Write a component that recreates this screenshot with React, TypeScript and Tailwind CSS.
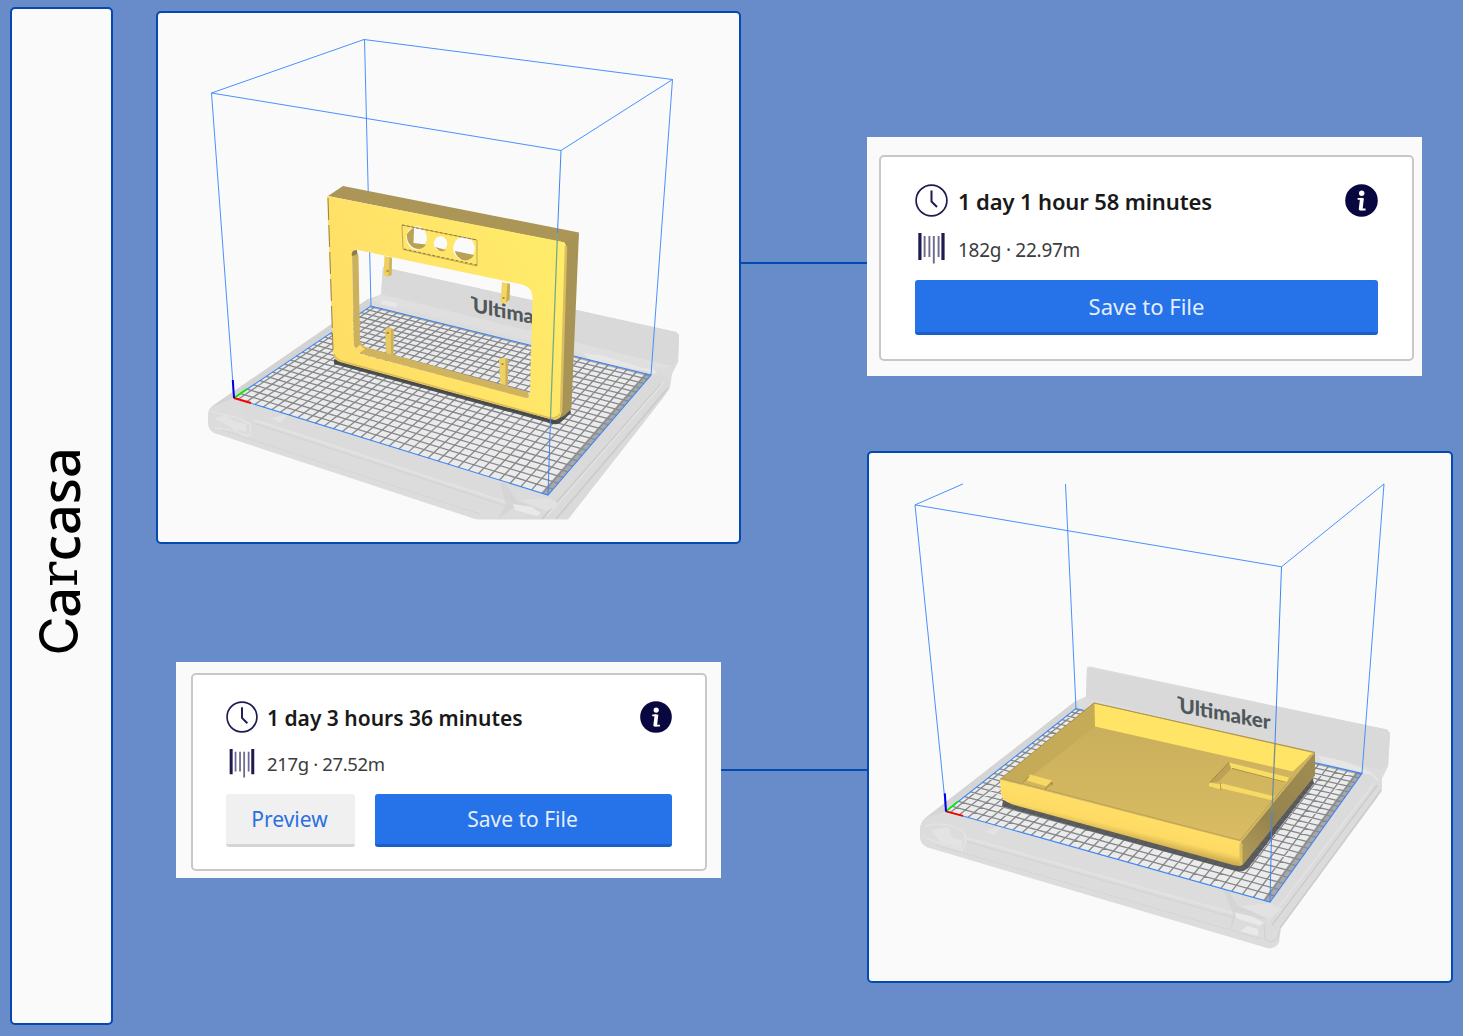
import React from "react";

type Pt = [number, number];

/** Maps the unit square onto a perspective quad: (0,0) (1,0) (1,1) (0,1). */
function project(q: [Pt, Pt, Pt, Pt]) {
  const [[x0, y0], [x1, y1], [x2, y2], [x3, y3]] = q;
  const dx1 = x1 - x2, dx2 = x3 - x2, dx3 = x0 - x1 + x2 - x3;
  const dy1 = y1 - y2, dy2 = y3 - y2, dy3 = y0 - y1 + y2 - y3;
  const den = dx1 * dy2 - dx2 * dy1;
  const g = (dx3 * dy2 - dx2 * dy3) / den;
  const h = (dx1 * dy3 - dx3 * dy1) / den;
  const a = x1 - x0 + g * x1, b = x3 - x0 + h * x3;
  const d = y1 - y0 + g * y1, e = y3 - y0 + h * y3;
  return (u: number, v: number): Pt => {
    const w = g * u + h * v + 1;
    return [(a * u + b * v + x0) / w, (d * u + e * v + y0) / w];
  };
}

const seg = (a: Pt, b: Pt) =>
  `M${a[0].toFixed(2)} ${a[1].toFixed(2)}L${b[0].toFixed(2)} ${b[1].toFixed(2)}`;

/** Build plate: 330 x 240 mm with a line every 10 mm, counted from the centre. */
function Plate({ left, front, right, back }: { left: Pt; front: Pt; right: Pt; back: Pt }) {
  const at = project([left, front, right, back]);
  let d = "";
  for (let x = 5; x < 330; x += 10) d += seg(at(x / 330, 0), at(x / 330, 1));
  for (let y = 10; y < 240; y += 10) d += seg(at(0, y / 240), at(1, y / 240));
  const outline = [left, front, right, back].map((p) => p.join(",")).join(" ");
  const strip = [at(0.981, 0), front, right, at(0.981, 1)].map((p) => p.join(",")).join(" ");
  const stripBack = [at(0, 0.985), at(1, 0.985), right, back].map((p) => p.join(",")).join(" ");
  return (
    <g>
      <polygon points={outline} fill="#ebebeb" />
      <path d={d} stroke="#85878a" strokeWidth="1.3" fill="none" />
      <polygon points={strip} fill="#8a8b8e" opacity="0.7" />
      <polygon points={stripBack} fill="#77797c" opacity="0.6" />
      <polygon points={outline} fill="none" stroke="#3d86f5" strokeWidth="1.1" />
    </g>
  );
}

function Axes({ x, y, up, gx, gy, rx, ry }: { x: number; y: number; up: number; gx: number; gy: number; rx: number; ry: number }) {
  return (
    <g fill="none">
      <path d={`M${x} ${y}L${x + gx} ${y + gy}`} stroke="#00f000" strokeWidth="1.8" />
      <path d={`M${x} ${y}L${x + rx} ${y + ry}`} stroke="#f80000" strokeWidth="1.9" />
      <path d={`M${x} ${y}L${x - 1.2} ${y - up}`} stroke="#0000e6" strokeWidth="2" />
    </g>
  );
}

function FrameScene() {
  return (
    <svg className="block h-full w-full" viewBox="158 13 581 529" preserveAspectRatio="none">
      <defs>
        <linearGradient id="faceA" x1="330" y1="360" x2="560" y2="240" gradientUnits="userSpaceOnUse">
          <stop offset="0" stopColor="#ffdd66" />
          <stop offset="1" stopColor="#ffec6a" />
        </linearGradient>
        <linearGradient id="sideA" x1="0" y1="240" x2="0" y2="415" gradientUnits="userSpaceOnUse">
          <stop offset="0" stopColor="#a89357" />
          <stop offset="1" stopColor="#a99458" />
        </linearGradient>
        <clipPath id="cutA"><rect x="158" y="13" width="582" height="506.5" /></clipPath>
      </defs>
      <g clipPath="url(#cutA)">
        <path d="M211 407L368 299L381 294.500L383 267L386 268L676 332L679 335L678 362L672 374L670 388L663 398L566 522H484L214 433Q208 430 208 423L208 416Q208 410 211 407Z" fill="#dcdcdc" />
        <path d="M383 267L676 332L679 335L678 362L671 366L381 296Z" fill="#d9d9d9" />
        <path d="M381 294L372 301L650 371L671 366Z" fill="#dfdfdf" />
        <path d="M383 300L398 303L396 308L380 304ZM583 353L604 356L640 367L655 370L660 378L646 371L590 361Z" fill="#e9e9e9" opacity="0.8" />
        <path d="M211 407L368 299L371 306L234 398Z" fill="#d3d3d3" />
        <path d="M651 375L660 372L670 380L664 396L568 519L522 519L548 495Z" fill="#dadada" />
        <path d="M661 384L542 519M668 388L556 519" stroke="#cbcbcb" strokeWidth="1.600" fill="none" />
        <path d="M664 382L547 516" stroke="#e4e4e4" strokeWidth="1.200" fill="none" />
        <path d="M234 398L548 495L522 510L250 424Z" fill="#dbdbdb" />
        <path d="M254 420L514 505" stroke="#e2e2e2" strokeWidth="2.500" fill="none" />
        <path d="M256 424L512 508" stroke="#d3d3d3" strokeWidth="1" fill="none" />
        <path d="M222 430L480 514" stroke="#cfcfcf" strokeWidth="0.900" strokeDasharray="2 1.500" fill="none" />
        <path d="M211 411Q226 416 236 417L250 424L251 434L246 436L234 430L214 428" stroke="#e5e5e5" strokeWidth="1.200" fill="none" />
        <path d="M214 418L226 415L233 421L246 424V432L232 428ZM272 418L290 413L280 423Z" fill="#e5e5e5" opacity="0.800" />
        <path d="M500 482L506 484L517 501L540 510L530 513L513 508L497 520L506 505Z" fill="#d0d0d0" opacity="0.600" />
        <path d="M513 504L532 507L541 513L537 516L515 510Z" fill="#e9e9e9" />
        <path d="M519 500L549 498L560 504L547 511Z" fill="#e1e1e1" />
      </g>
      <path d="M471 297L475.500 298.500" stroke="#50575a" strokeWidth="2" />
      <text transform="matrix(1 0.2 0 1 473 312)" fill="#50575a" fontFamily="Lato" fontWeight="900" fontSize="20" textLength="90" lengthAdjust="spacingAndGlyphs">Ultimaker</text>
      <Plate left={[234, 398]} front={[548, 495]} right={[651, 375]} back={[371, 306]} />
      <path d="M211.500 93L364 39.500L672.500 79.500L561 150.500ZM211.500 93L234 398M364.500 39.500L371 306M672.500 79.500L651 375" stroke="#3484ff" strokeWidth="0.900" fill="none" />
      <path d="M334 359L556 420L570 408L571 413L560 423Q555 426 546 422L334 364Z" fill="#3f4042" opacity="0.900" />
      <path d="M328 196L343 186L579 232.500L566 243Z" fill="#ab9658" />
      <path d="M565 242L579 232.500L571.500 407Q570 412 562 417L556 420Z" fill="url(#sideA)" />
      <path fillRule="evenodd" fill="url(#faceA)" d="M327 196L561 241.500Q566 242.500 566 246L561 414Q560 421 550 419L340 362Q334 360 333 352ZM352 253Q352 249 358 250L522 284.500Q532 287 532.500 297L530 393L528 398L364 355Q355 352 354 345ZM406.600 235.500A10 11.500 0 0 0 426.600 240.500A10 11.500 0 0 0 406.600 235.500ZM434 242A6.500 7 0 0 0 447 245A6.500 7 0 0 0 434 242ZM453.500 246A10.500 11.500 0 0 0 474.500 251A10.500 11.500 0 0 0 453.500 246Z" />
      <path d="M334 354Q335 359 341 361L550 418Q557 419 560 414" stroke="#dcbc5a" strokeWidth="1.600" fill="none" />
      <path d="M328 198L333 350" stroke="#96834f" strokeWidth="1" strokeDasharray="22 5" fill="none" />
      <path d="M566 246L561 413" stroke="#d9bd5f" strokeWidth="2.500" fill="none" />
      <path d="M352 253Q352 249 357 251L358.500 256L360 342L364 348L357 351L354 345Z" fill="#cbb05e" />
      <path d="M351.500 255Q352 250 357 250L357 254L353 256Z" fill="#8f7d49" />
      <path d="M360 342L365 347L528 392L529 396L526 398L365 355L357 351Q355 347 360 342Z" fill="#cfb35f" />
      <path d="M355 349L360 345L365 349L358 354Z" fill="#fddd67" />
      <path d="M402 225L477 240V266L403 249.500Z" fill="none" stroke="#c2a957" strokeWidth="1" />
      <path d="M402 225L477 240M404 249L477 265" stroke="#86763f" strokeWidth="0.900" strokeDasharray="3 1.800" fill="none" />
      <path d="M407 234Q412 227 414 228L413.500 243L426 244.500Q422 251 414 248Q406 243 407 234ZM435 247L446 250Q443 252 439 250.500ZM455 251L474 255Q470 262 462 260Q456 257 455 251Z" fill="#baa153" />
      <path d="M384.500 256L392 258L391.500 275L388 277L383.500 275Z" fill="#edcf62" />
      <path d="M389.500 257L392 258L391.500 275L388.500 276Z" fill="#cfb35d" />
      <path d="M502 282L510 284L509.500 300L505 304L500.500 302Z" fill="#f3d664" />
      <path d="M507.500 283L510 284L509.500 300L506 302Z" fill="#c8ad59" />
      <path d="M385 329L389 327L393.500 329V355L386 353Z" fill="#e8c962" />
      <path d="M391 329L393.500 329V355L391 354Z" fill="#cbaf5a" />
      <path d="M499 359L503 357.500L508 359V386L500.500 384Z" fill="#eed163" />
      <path d="M505.500 359L508 359V386L505.500 385Z" fill="#cbaf5a" />
      <path d="M386.500 332h2.500v2h-2.500zM386.500 270h2v2h-2zM502.500 297h2v2h-2zM501.500 363h2v2h-2z" fill="#b08d38" />
      <path d="M561 150.500L557.500 233M550.500 418L548 495" stroke="#3d86f5" strokeWidth="1" fill="none" />
      <path d="M557.500 233L550.500 418" stroke="#78a98f" strokeWidth="1.300" fill="none" />
      <Axes x={234} y={398} up={18} gx={13} gy={-9} rx={17} ry={5} />
    </svg>
  );
}

function TrayScene() {
  return (
    <svg className="block h-full w-full" viewBox="869 453 582 529" preserveAspectRatio="none">
      <defs>
        <linearGradient id="floorB" x1="1150" y1="710" x2="1150" y2="850" gradientUnits="userSpaceOnUse">
          <stop offset="0" stopColor="#c8ad5b" />
          <stop offset="1" stopColor="#dabd63" />
        </linearGradient>
        <linearGradient id="frontB" x1="1121" y1="811" x2="1115" y2="836" gradientUnits="userSpaceOnUse">
          <stop offset="0" stopColor="#ffde67" />
          <stop offset="0.650" stopColor="#fdda64" />
          <stop offset="1" stopColor="#d0af51" />
        </linearGradient>
        <linearGradient id="sideB" x1="1240" y1="850" x2="1315" y2="760" gradientUnits="userSpaceOnUse">
          <stop offset="0" stopColor="#ad9856" />
          <stop offset="0.350" stopColor="#96844f" />
          <stop offset="1" stopColor="#a08c50" />
        </linearGradient>
      </defs>
      <path d="M925 819L1075 702L1086 697L1087 668L1090 667L1387 730L1390 734L1388 767L1382 779L1382 791L1376 800L1281 929L1279 944Q1275 950 1267 949L927 848Q920 845 920 838L920 830Q920 823 925 819Z" fill="#dcdcdc" />
      <path d="M1087 668L1387 730L1390 734L1388 767L1380 770L1086 698Z" fill="#d9d9d9" />
      <path d="M925 819L1075 702L1076 709L946 812Z" fill="#d5d5d5" />
      <path d="M1318 756L1345 762L1372 773L1380 782L1368 775L1322 763Z" fill="#e9e9e9" opacity="0.800" />
      <path d="M1362 774L1372 775L1380 786L1374 800L1278 930L1244 925L1270 903Z" fill="#dbdbdb" />
      <path d="M1377 786L1272 926M1381 791L1280 929" stroke="#cbcbcb" strokeWidth="1.400" fill="none" />
      <path d="M1374 784L1268 922" stroke="#e4e4e4" strokeWidth="1.200" fill="none" />
      <path d="M964 838L1236 915" stroke="#e2e2e2" strokeWidth="2.500" fill="none" />
      <path d="M966 842L1232 918" stroke="#d2d2d2" strokeWidth="1" fill="none" />
      <path d="M936 846L1262 940" stroke="#cecece" strokeWidth="0.900" strokeDasharray="2 1.500" fill="none" />
      <path d="M925 827Q938 822 955 828Q967 832 966 842L962 851L945 846L924 838" stroke="#e5e5e5" strokeWidth="1.200" fill="none" />
      <path d="M931 831L948 828L952 838L962 841V850L940 843ZM984 832L1004 825L994 836Z" fill="#e5e5e5" opacity="0.800" />
      <path d="M1223 890L1229 892L1238 907L1258 914L1270 920L1252 920L1236 916L1230 934L1233 914Z" fill="#d0d0d0" opacity="0.600" />
      <path d="M1235 913L1254 918L1264 924L1260 927L1236 919ZM1240 932L1258 937L1258 930L1248 927Z" fill="#e9e9e9" />
      <path d="M1241 907L1270 904L1282 910L1268 920Z" fill="#e2e2e2" />
      <path d="M1264 925L1265 940Q1270 945 1277 940L1280 930" stroke="#d1d1d1" strokeWidth="1.200" fill="none" />
      <path d="M1177.500 697.500L1182 699" stroke="#50575a" strokeWidth="2" />
      <text transform="matrix(1 0.185 0 1 1179.500 713)" fill="#50575a" fontFamily="Lato" fontWeight="900" fontSize="20.5" textLength="91" lengthAdjust="spacingAndGlyphs">Ultimaker</text>
      <Plate left={[946, 812]} front={[1270, 903]} right={[1362, 774]} back={[1076, 709]} />
      <path d="M963 484L915 505L1281.500 567L1384 484M915 505L946 812M1065.500 484L1076 709M1384 484L1362 774" stroke="#3484ff" strokeWidth="0.900" fill="none" />
      <path d="M1003 801L1240 862L1312 776L1314 784L1248 869Q1242 874 1234 871L1150 848L1002 807Z" fill="#4f5052" opacity="0.920" />
      <path d="M1000 780L1094 703L1315 753L1241 844Z" fill="url(#floorB)" />
      <path d="M1000 780L1094 703.500L1095 727L1031 777L1020 785Z" fill="#c5aa58" />
      <path d="M1094.500 704L1313 753.500L1293 772L1095 727Z" fill="#ffe466" />
      <path d="M1241 843L1315 753V776L1245 863Q1242 867 1238 867Z" fill="url(#sideB)" />
      <path d="M1000 780L1241 842.500V866Q1238 867 1234 866L1012 805Q1002 802 1001 794Z" fill="url(#frontB)" />
      <path d="M1241 844V866" stroke="#dabd5d" strokeWidth="3" fill="none" />
      <path d="M1000 780L1094 703.500L1315 753" stroke="#ae954d" strokeWidth="1" fill="none" />
      <path d="M1003 779L1240 841L1311 755" stroke="#b99f50" strokeWidth="0.900" fill="none" />
      <path d="M1293 772L1311 755L1303 766L1292 778Z" fill="#cfb35d" />
      <path d="M1023 781L1030 775L1053 781L1051 787L1045 789L1027 784Z" fill="#d2b45c" />
      <path d="M1030 775L1052 781L1046 787L1027 781Z" fill="#f6d865" />
      <path d="M1023 783L1029 777M1045 790L1052 783V786" stroke="#94813f" strokeWidth="1" fill="none" />
      <path d="M1229 763L1289 778L1286 784L1231 769Z" fill="#f8dc64" />
      <path d="M1229 763L1231 769L1219 782L1209 784Z" fill="#bca252" />
      <path d="M1232 769L1286 783M1229 763L1209 784M1221 783V790" stroke="#9b8544" strokeWidth="0.900" fill="none" />
      <path d="M1209 783L1220 785V790L1209 787ZM1221 784L1275 797L1272 801L1221 789Z" fill="#f7da63" />
      <path d="M1281.500 567L1275 744M1272 812L1270 903" stroke="#3d86f5" strokeWidth="1" fill="none" />
      <path d="M1275 744L1272 812" stroke="#728f92" strokeWidth="1.300" fill="none" />
      <Axes x={946} y={812} up={18} gx={12} gy={-10} rx={17} ry={4.5} />
    </svg>
  );
}

function Clock({ className }: { className: string }) {
  return (
    <svg className={className} viewBox="0 0 33 33" fill="none" stroke="#1d1b50">
      <circle cx="16.500" cy="16.500" r="15.400" strokeWidth="1.700" />
      <path d="M16.500 6.500V17.500L22 23" strokeWidth="2" />
    </svg>
  );
}

function Spool({ className }: { className: string }) {
  return (
    <svg className={className} viewBox="0 0 27 31" fill="none" stroke="#1d1b50">
      <path d="M1.900 0V27M25 0V27" strokeWidth="3.200" />
      <path d="M6.600 3V24M11.400 3V24M15.800 3V30.500M20.600 3V24" strokeWidth="1.900" opacity="0.650" />
    </svg>
  );
}

function Info({ className }: { className: string }) {
  return (
    <svg className={className} viewBox="0 0 33 33" fill="none">
      <circle cx="16.500" cy="16.500" r="16.300" fill="#08073f" />
      <circle cx="16.700" cy="9.300" r="2.700" fill="#fff" />
      <path d="M12.600 14.800H17.300M14.500 25.500H20.600" stroke="#fff" strokeWidth="1.800" />
      <path d="M17 14L15.600 26" stroke="#fff" strokeWidth="3.800" />
    </svg>
  );
}

function Sidebar() {
  return (
    <aside className="mt-[7px] ml-[10px] flex h-[1018px] w-[103px] shrink-0 items-center justify-center rounded-[5px] border-2 border-[#0349ae] bg-[#fafafa]">
      <h1 className="mt-[70px] mr-[5px] rotate-180 font-['Noto_Sans',sans-serif] text-[54px] leading-none font-medium whitespace-nowrap text-black [writing-mode:vertical-rl]">
        <span className="font-['Inter',sans-serif] text-[54px] font-normal tracking-[-1.500px]">C</span>a<span className="font-['DejaVu_Serif',serif] text-[53px] font-normal">r</span>casa
      </h1>
    </aside>
  );
}

export default function App() {
  return (
    <main className="flex h-[1036px] w-[1463px] overflow-hidden bg-[#688bc9] font-['Noto_Sans',sans-serif]">
      <Sidebar />
      <div className="ml-[43px] flex w-[585px] shrink-0 flex-col pt-[11px]">
        <section className="h-[533px] w-[585px] overflow-hidden rounded-[5px] border-2 border-[#0349ae] bg-[#fafafa]">
          <FrameScene />
        </section>
        <div className="mt-[118px] ml-[20px] flex items-center">
          <section className="h-[216px] w-[545px] shrink-0 bg-[#fafafa] pt-[11px] pl-[15px]">
            <div className="h-[198px] w-[516px] rounded-[5px] border-2 border-[#c8c8c8] bg-white px-[33px] pt-[26px]">
              <div className="flex h-8 items-center">
                <Clock className="h-8 w-8" />
                <span className="mt-[4px] ml-[9px] text-[21px] font-semibold whitespace-nowrap text-[#191919]">1 day 3 hours 36 minutes</span>
                <Info className="ml-auto h-8 w-8" />
              </div>
              <div className="mt-[15px] flex h-[30px] items-center">
                <Spool className="ml-[3px] h-[29px] w-[26px]" />
                <span className="mt-[2px] ml-[12px] text-[18.500px] tracking-[-0.350px] whitespace-nowrap text-[#3c3c3c]">217g · 27.52m</span>
              </div>
              <div className="mt-[16px] flex gap-5">
                <button className="h-[53px] w-[129px] rounded-[3px] border-b-[3px] border-[#d5d5d5] bg-[#f0f0f0] pt-[2px] pr-[2px] text-[21px] text-[#2a71dd]">Preview</button>
                <button className="h-[53px] flex-1 rounded-[3px] border-b-[3px] border-[#1a5fc9] bg-[#2672e9] pt-[2px] pr-[2px] text-[21px] text-[#e4eefc]">Save to File</button>
              </div>
            </div>
          </section>
          <div className="h-[2px] flex-1 bg-[#0349ae]" />
        </div>
      </div>
      <div className="flex w-[126px] shrink-0 flex-col pt-[262px]">
        <div className="h-[2px] bg-[#0349ae]" />
        <div className="mt-[505px] h-[2px] bg-[#0349ae]" />
      </div>
      <div className="flex w-[586px] shrink-0 flex-col pt-[137px]">
        <section className="h-[239px] w-[555px] bg-[#fafafa] pt-[18px] pl-[12px]">
          <div className="h-[206px] w-[535px] rounded-[5px] border-2 border-[#c8c8c8] bg-white px-[34px] pt-[27px]">
            <div className="flex h-[33px] items-center">
              <Clock className="h-[33px] w-[33px]" />
              <span className="mt-[2px] ml-[10px] text-[22px] font-semibold tracking-[-0.130px] whitespace-nowrap text-[#191919]">1 day 1 hour 58 minutes</span>
              <Info className="ml-auto h-[33px] w-[33px]" />
            </div>
            <div className="mt-[16px] flex h-[31px] items-center">
              <Spool className="ml-[3px] h-[31px] w-[27px]" />
              <span className="mt-[4px] ml-[13px] text-[19px] tracking-[-0.270px] whitespace-nowrap text-[#3c3c3c]">182g · 22.97m</span>
            </div>
            <button className="mt-[16px] h-[55px] w-full rounded-[3px] border-b-[3px] border-[#1a5fc9] bg-[#2672e9] text-[22px] text-[#e4eefc]">Save to File</button>
          </div>
        </section>
        <section className="mt-[75px] h-[532px] w-[586px] overflow-hidden rounded-[5px] border-2 border-[#0349ae] bg-[#fafafa]">
          <TrayScene />
        </section>
      </div>
    </main>
  );
}
